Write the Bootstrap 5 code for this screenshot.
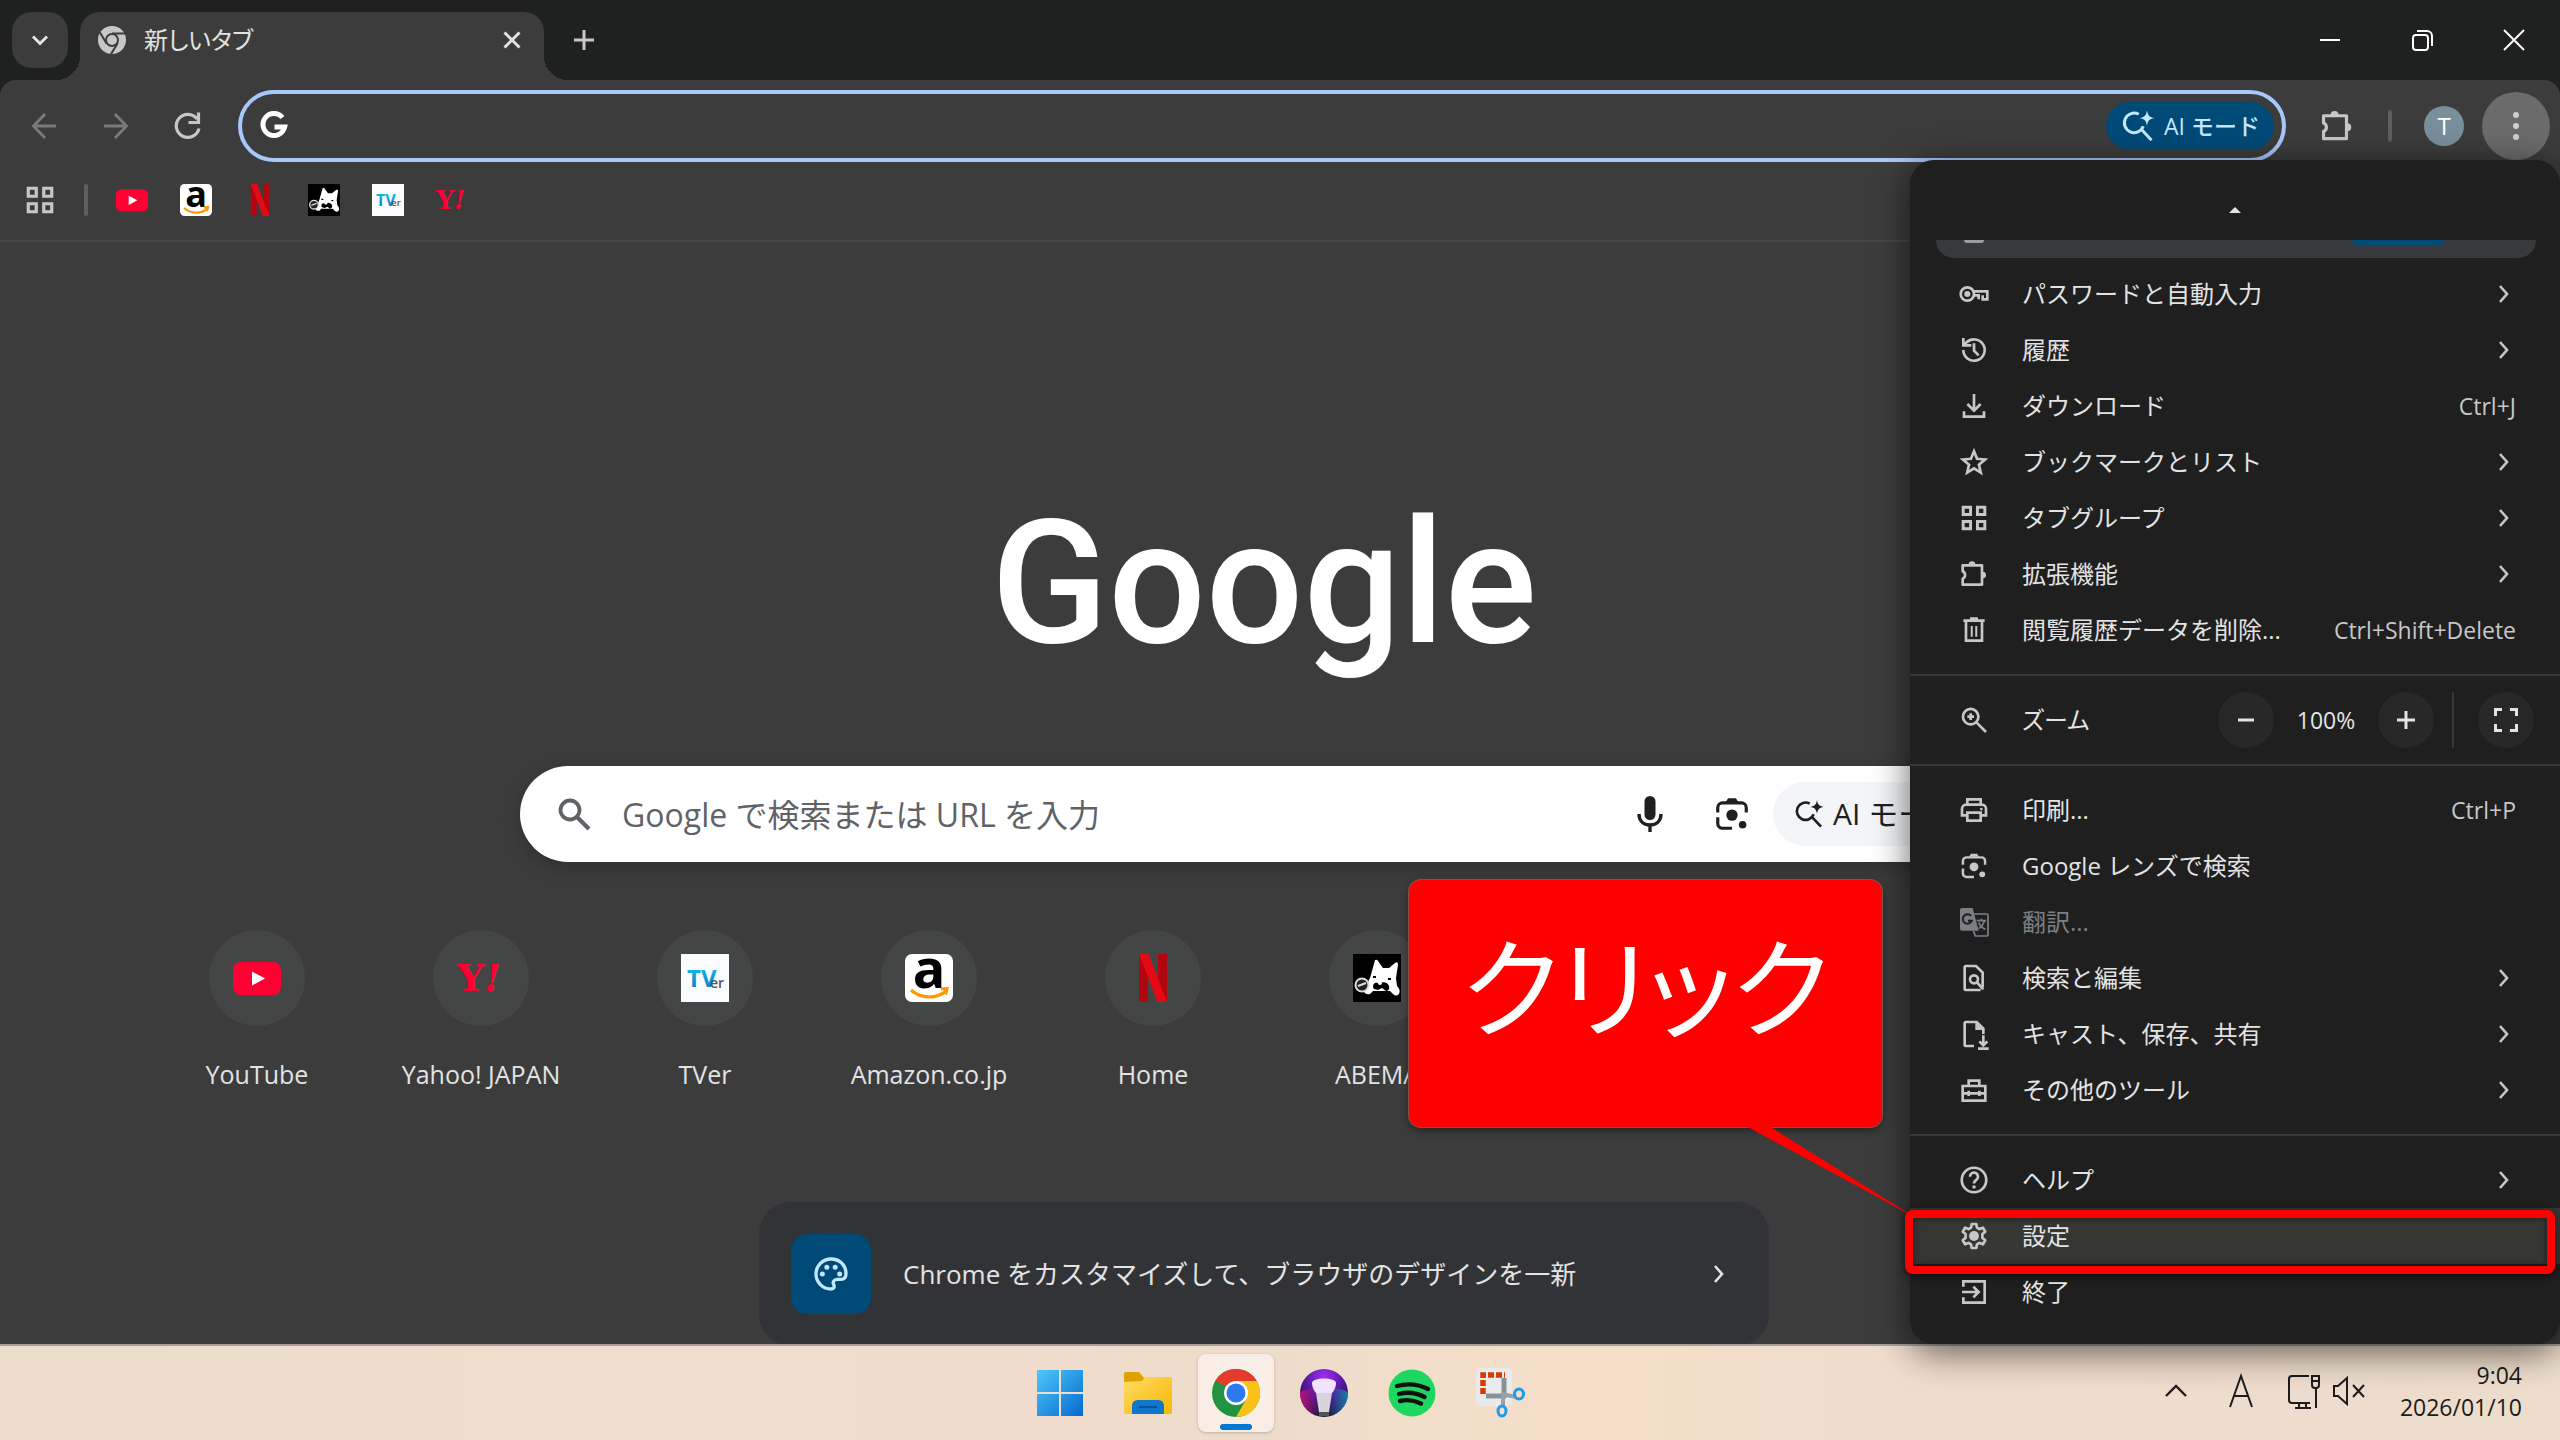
<!DOCTYPE html>
<html lang="ja" data-bs-theme="dark">
<head>
<meta charset="utf-8">
<meta name="viewport" content="width=device-width, initial-scale=1">
<title>新しいタブ</title>
<link href="https://cdn.jsdelivr.net/npm/bootstrap@5.3.0/dist/css/bootstrap.min.css" rel="stylesheet">
<style>
  body { font-family: "Open Sans", "Noto Sans CJK JP", sans-serif; font-feature-settings: "palt"; font-size: 24px; line-height: 32px; color: #e3e3e3; background: #3c3c3c; }
  svg { display: block; flex: none; stroke-width: 2; }
  a { color: inherit; text-decoration: none; }
  .btn { --bs-btn-padding-x: 0; --bs-btn-padding-y: 0; --bs-btn-border-width: 0; --bs-btn-color: inherit; --bs-btn-font-size: 24px; --bs-btn-line-height: 32px; display: flex; align-items: center; justify-content: center; flex: none; }
  .ln { fill: none; stroke: currentColor; }
  .i24 { width: 24px; height: 24px; } .i32 { width: 32px; height: 32px; } .i36 { width: 36px; height: 36px; } .i48 { width: 48px; height: 48px; }

  .shell { min-height: 100vh; background: #1f2121; }
  .tabstrip { height: 80px; padding-left: 12px; }
  .tab-area { padding-top: 12px; }
  .tab-search { width: 56px; height: 56px; border-radius: 20px; background: #3c3c3c; margin-right: 12px; }
  .active-tab { position: relative; width: 464px; height: 68px; border-radius: 20px 20px 0 0; background: #3c3c3c; padding: 0 20px 12px 18px; gap: 18px; }
  .active-tab::before, .active-tab::after { content: ""; position: absolute; bottom: 0; width: 24px; height: 24px; }
  .active-tab::before { right: 100%; background: radial-gradient(circle at 0 0, transparent 24px, #3c3c3c 24px); }
  .active-tab::after { left: 100%; background: radial-gradient(circle at 100% 0, transparent 24px, #3c3c3c 24px); }
  .win-btn { width: 92px; height: 80px; color: #fff; }

  .chrome-bars { background: #3c3c3c; border-radius: 16px 16px 0 0; border-bottom: 2px solid #484848; }
  .toolbar { height: 92px; padding: 0 10px 0 8px; position: relative; }
  .nav-btn { width: 72px; height: 56px; color: #c7c7c7; }
  .nav-btn.off { color: #7b7b7b; }
  .omnibox { height: 72px; border: 4px solid #a8c7fa; border-radius: 36px; padding: 0 8px 0 16px; margin-left: 14px; gap: 12px; }
  .omnibox input, .searchbox input { background: none; border: 0; outline: 0; box-shadow: none; min-width: 0; color: inherit; }
  .ai-chip { height: 48px; width: 168px; border-radius: 24px; gap: 8px; background: #004a77 !important; color: #c2e7ff !important; font-weight: 500; font-size: 23px; }
  .ext-btn { width: 102px; color: #c7c7c7 !important; }
  .vbar { width: 4px; height: 32px; border-radius: 2px; background: #5e5e5e; }
  .avatar { width: 40px; height: 40px; border-radius: 50%; margin: 0 18px 0 32px; background: #78909c !important; color: #fff !important; }
  .kebab { width: 68px; height: 68px; border-radius: 50%; background: #6b6b6b !important; color: #d0d0d0 !important; }
  .bookmarks { height: 68px; padding: 0 0 12px 24px; gap: 32px; }
  .bookmarks .vbar { margin: 0 -4px; }
  .bookmarks .btn { color: #c7c7c7; }

  .ntp { background: #3c3c3c; padding-right: 32px; height: 1102px; overflow: hidden; }
  .wordmark { font-family: Roboto, sans-serif; font-weight: 500; font-size: 172px; line-height: 240px; color: #fff; margin: 221px 0 63px; }
  .searchbox { width: 1488px; height: 96px; border-radius: 48px; background: #fff; color: #1f1f1f; padding: 0 24px 0 36px; box-shadow: 0 6px 20px #0003; font-size: 32px; }
  .searchbox input { margin-left: 28px; color: #5f6368; font-size: 32px; }
  .searchbox input::placeholder { color: #5f6368; opacity: 1; }
  .tool-btn { width: 82px; }
  .ai-pill { width: 211px; height: 64px; border-radius: 32px; background: #f3f5f8 !important; color: #1f1f1f !important; font-size: 30px; gap: 8px; justify-content: flex-start; padding-left: 20px; }
  .shortcuts { margin-top: 68px; padding-left: 145px; }
  .site { width: 224px; font-size: 25px; color: #e3e3e3; }
  .disc { width: 96px; height: 96px; border-radius: 50%; background: #444645; margin-bottom: 32px; }
  .promo { width: 1010px; height: 144px; border-radius: 32px; background: #323336; margin-top: 112px; padding: 0 38px 0 32px; gap: 32px; font-size: 26px; font-feature-settings: normal; }
  .promo-icon { width: 80px; height: 80px; border-radius: 16px; background: #004a77; color: #c2e7ff; }

  .taskbar { height: 96px; border-top: 2px solid #a99f98; background: linear-gradient(90deg, #ecdecb, #f1ddce 30%, #eedccb 50%, #f5dfc9 62%, #efdccd 75%, #edddcb); color: #1c1c1c; }
  .tray { color: #1c1c1c; right: 38px; top: 0; bottom: 4px; }
  .clock { font-size: 23px; width: 152px; }
  .apps { gap: 12px; }
  .app { width: 76px; height: 78px; border-radius: 8px; }
  .app.on { background: #f9eee5; box-shadow: 0 1px 3px #0003; position: relative; }
  .app.on::after { content: ""; position: absolute; bottom: 2px; width: 32px; height: 6px; border-radius: 3px; background: #0078d4; }

  .appmenu { position: absolute; top: 160px; right: 0; width: 650px; background: #1f1f1f; border-radius: 24px; box-shadow: 0 8px 36px #0009; padding-bottom: 24px; z-index: 5; }
  .scroll-up { height: 80px; padding-top: 20px; }
  .peek { height: 18px; margin: 0 24px 8px 26px; border-radius: 0 0 24px 24px; background: #37393d; overflow: hidden; }
  .peek::before { content: ""; display: block; float: left; width: 20px; height: 3px; margin-left: 28px; border-radius: 0 0 12px 12px; background: #9a9c9f; }
  .peek span { display: block; width: 92px; height: 6px; margin-left: 416px; border-radius: 0 0 48px 48px; background: #004a77; }
  .mrow { width: 100%; height: 56px; padding: 0 44px 0 48px; gap: 32px; color: #e3e3e3 !important; justify-content: flex-start; text-align: left; border-radius: 0; position: relative; }
  .mrow svg { color: #c7c7c7; }
  .mrow kbd { margin-left: auto; padding: 0; background: none; color: #c7c7c7; font: inherit; font-size: 23px; }
  .mrow .arrow { margin-left: auto; }
  .mrow.off, .mrow.off svg { color: #7b7f84 !important; }
  .mrow.current { background: #363735; }
  .mrow.current::after { content: ""; position: absolute; inset: 2px 5px -10px -5px; border: 8px solid #f00; border-radius: 8px; box-shadow: 0 2px 8px #000a, inset 0 0 6px #0008; }
  .appmenu hr { margin: 16px 0; border-top: 2px solid #383838; opacity: 1; }
  .zrow { padding-right: 26px; gap: 0; }
  .zname { padding-left: 32px; }
  .zbtn { width: 56px; height: 56px; border-radius: 50%; background: #282828 !important; }
  .zbtn svg { color: #e3e3e3; }
  .zval { width: 104px; font-size: 23px; }
  .zbar { width: 2px; height: 56px; background: #383838; margin: 0 24px 0 18px; }

  .callout { position: absolute; top: 720px; left: -501px; width: 473px; height: 247px; background: #f00; color: #fff; border-radius: 12px; box-shadow: 0 0 0 1px #8a5050, 0 3px 8px #0007; font-size: 108px; line-height: 216px; font-weight: 400; z-index: 6; }
  .callout svg { position: absolute; top: 246px; left: 337px; }
</style>
<script src="https://cdn.jsdelivr.net/npm/bootstrap@5.3.0/dist/js/bootstrap.bundle.min.js"></script>
</head>
<body>
<svg width="0" height="0" class="position-absolute" aria-hidden="true">
  <defs>
    <linearGradient id="tv" x1="0" x2="0" y1="0" y2="1"><stop offset="0" stop-color="#12d0ee"/><stop offset="1" stop-color="#0a6cc0"/></linearGradient>
    <symbol id="right" viewBox="0 0 24 24"><path class="ln" stroke-width="2.6" d="M8 4l7 8-7 8"/></symbol>
    <symbol id="puzzle" viewBox="0 0 24 24"><path class="ln" stroke-linejoin="round" d="M3.500 5.500h14.500v14.500h-14.500v-4.500a3 3 0 0 0 0-5.500z"/><path fill="currentColor" d="M8 5a2.500 2.500 0 0 1 5 0zM18.500 10.300a2.500 2.500 0 0 1 0 5z"/></symbol>
    <symbol id="grid" viewBox="0 0 24 24"><path class="ln" stroke-width="2.400" d="M3.200 3.200h6v6h-6zM14.800 3.200h6v6h-6zM3.200 14.800h6v6h-6zM14.800 14.800h6v6h-6z"/></symbol>
    <symbol id="lens" viewBox="0 0 24 24"><path class="ln" d="M3 11V8a3 3 0 0 1 3-3h12a3 3 0 0 1 3 3v3M3 14v4a3 3 0 0 0 3 3h6"/><path fill="currentColor" d="M8 4.500L9.500 2h5L16 4.500z"/><circle cx="12" cy="12.700" r="3.600" fill="currentColor"/><circle cx="18.700" cy="18.800" r="2.400" fill="currentColor"/></symbol>
    <symbol id="aisearch" viewBox="0 0 24 24"><path class="ln" d="M12.500 4.200A6.500 6.500 0 1 0 15.500 12.200M14.500 14.500l6.500 7"/><path fill="currentColor" d="M18 1.500c.6 3.500 1.500 4.500 5 5.200-3.500.7-4.400 1.700-5 5.200-.6-3.500-1.500-4.500-5-5.200 3.500-.7 4.400-1.700 5-5.200z"/></symbol>
    <symbol id="yt" viewBox="0 0 48 48"><rect y="8" width="48" height="33" rx="8" fill="#ff0033"/><path d="M19 17.500l13 7-13 7z" fill="#fff"/></symbol>
    <symbol id="amz" viewBox="0 0 48 48"><rect width="48" height="48" rx="7" fill="#fff"/><text x="24" y="34" text-anchor="middle" font-family="Open Sans" font-weight="700" font-size="54" fill="#000">a</text><path d="M6 36c10 9 26 9 35 1M36 35l6-.500-1.500 6" fill="none" stroke="#f90" stroke-width="3.200"/></symbol>
    <symbol id="nfx" viewBox="0 0 48 48"><path d="M10 0h9v48h-9zM29 0h9v48h-9z" fill="#b1060f"/><path d="M10 0h9.500L38 48h-9.500z" fill="#e50914"/></symbol>
    <symbol id="dog" viewBox="0 0 48 48"><path d="M0 0h48v48H0z"/><path d="M17 24L19 17 22 6q2-1 3 1l5 7h6l6-5q3-2 3 2l-2 13 1 8q4 4 2 8-3 3-6 0l-3-3H20l-3 3q-4 1-6-2l5-6q-2-4 1-8z" fill="#fff"/><circle cx="9" cy="31" r="6.500" fill="#222" stroke="#ddd" stroke-width="2"/><path d="M5 32l8-3" stroke="#ddd" stroke-width="2"/><path d="M20 33c0-5 4-5 6-3 3-3 9-2 10 2 1 3-1 5-3 5l-4-3-4 2-4-1zM20 22h3v2h-3zM35 24h3v2h-3z"/><circle cx="27" cy="29" r="2" fill="#fff"/></symbol>
    <symbol id="tver" viewBox="0 0 48 48"><path d="M0 0h48v48H0z" fill="#fbfcff"/><text x="6" y="33" font-family="Open Sans" font-weight="700" font-size="24" fill="url(#tv)">TV</text><text x="29" y="33.500" font-family="Open Sans" font-weight="600" font-size="14" fill="#555">er</text></symbol>
    <symbol id="yah" viewBox="0 0 48 48"><text x="0" y="37" font-family="DejaVu Serif" font-weight="700" font-size="38" fill="#ff0033">Y<tspan font-style="italic">!</tspan></text></symbol>
  </defs>
</svg>

<div class="shell d-flex flex-column position-relative">
  <header class="tabstrip d-flex align-items-end">
    <div class="tab-area d-flex align-items-start h-100 flex-grow-1">
      <button class="btn tab-search" aria-label="タブを検索"><svg class="i24" viewBox="0 0 24 24"><path class="ln" stroke-width="3" d="M5 8.500l7 7 7-7"/></svg></button>
      <div class="active-tab d-flex align-items-center">
        <svg width="28" height="28" viewBox="0 0 28 28"><circle cx="14" cy="14" r="14" fill="#c7c7c7"/><circle cx="14" cy="14" r="6" fill="#c7c7c7" stroke="#3c3c3c" stroke-width="2"/><path d="M14 7.500h13M8.500 17.500L2 6.500M19.500 17.500L13 28" stroke="#3c3c3c" stroke-width="2"/></svg>
        <span class="flex-grow-1">新しいタブ</span>
        <button class="btn" aria-label="タブを閉じる"><svg class="i24" viewBox="0 0 24 24"><path class="ln" stroke-width="3" d="M4.500 4.500l15 15M19.500 4.500l-15 15"/></svg></button>
      </div>
      <button class="btn nav-btn ms-1" aria-label="新しいタブを開く"><svg class="i24" viewBox="0 0 24 24"><path class="ln" stroke-width="3" d="M12 2v20M2 12h20"/></svg></button>
    </div>
    <button class="btn win-btn" aria-label="最小化"><svg class="i24" viewBox="0 0 24 24"><path class="ln" d="M2 12h20"/></svg></button>
    <button class="btn win-btn" aria-label="元に戻す"><svg class="i24" viewBox="0 0 24 24"><rect class="ln" x="3" y="7" width="15" height="15" rx="3"/><path class="ln" d="M7 3h10a5 5 0 0 1 5 5v10"/></svg></button>
    <button class="btn win-btn" aria-label="閉じる"><svg class="i24" viewBox="0 0 24 24"><path class="ln" d="M2 2l20 20M22 2L2 22"/></svg></button>
  </header>

  <div class="chrome-bars">
    <nav class="toolbar d-flex align-items-center">
      <button class="btn nav-btn off" aria-label="戻る"><svg class="i32" viewBox="0 0 32 32"><path class="ln" stroke-width="2.800" d="M28 16H6M17 4L5.500 16 17 28"/></svg></button>
      <button class="btn nav-btn off" aria-label="進む"><svg class="i32" viewBox="0 0 32 32"><path class="ln" stroke-width="2.800" d="M4 16h22M15 4l11.500 12L15 28"/></svg></button>
      <button class="btn nav-btn" aria-label="再読み込み"><svg class="i32" viewBox="0 0 32 32"><path class="ln" stroke-width="3.200" d="M27 18.500A11.500 11.500 0 1 1 25 9M26.500 2.500v10h-10"/></svg></button>
      <div class="omnibox d-flex align-items-center flex-grow-1">
        <svg width="32" height="32" viewBox="0 0 32 32"><path d="M24.500 7.500A11 11 0 1 0 26.700 17H16.500" fill="none" stroke="#fff" stroke-width="5"/></svg>
        <input class="flex-grow-1" type="text" aria-label="アドレスと検索バー">
        <button class="btn ai-chip"><svg class="i36" viewBox="0 0 24 24"><use href="#aisearch"/></svg>AI モード</button>
      </div>
      <button class="btn ext-btn" aria-label="拡張機能"><svg width="38" height="38"><use href="#puzzle"/></svg></button>
      <span class="vbar"></span>
      <button class="btn avatar" aria-label="プロフィール">T</button>
      <button class="btn kebab" aria-label="メニュー"><svg width="32" height="32" viewBox="0 0 32 32" fill="currentColor"><circle cx="16" cy="5" r="3"/><circle cx="16" cy="16" r="3"/><circle cx="16" cy="27" r="3"/></svg></button>
    </nav>
    <nav class="bookmarks d-flex align-items-center">
      <button class="btn" aria-label="タブグループ"><svg class="i32"><use href="#grid"/></svg></button>
      <span class="vbar"></span>
      <a href="#yt" aria-label="YouTube"><svg class="i32"><use href="#yt"/></svg></a>
      <a href="#amz" aria-label="Amazon"><svg class="i32"><use href="#amz"/></svg></a>
      <a href="#nfx" aria-label="Netflix"><svg class="i32"><use href="#nfx"/></svg></a>
      <a href="#dog" aria-label="ABEMA"><svg class="i32"><use href="#dog"/></svg></a>
      <a href="#tver" aria-label="TVer"><svg class="i32"><use href="#tver"/></svg></a>
      <a href="#yah" aria-label="Yahoo! JAPAN"><svg class="i32"><use href="#yah"/></svg></a>
    </nav>
  </div>

  <main class="ntp d-flex flex-column align-items-center">
    <h1 class="wordmark">Google</h1>
    <form class="searchbox d-flex align-items-center flex-shrink-0">
      <svg width="36" height="36" viewBox="0 0 36 36" color="#5f6368"><circle class="ln" stroke-width="3.800" cx="14" cy="14" r="9.500"/><path class="ln" stroke-width="4.200" d="M20.500 20.500L33 33"/></svg>
      <input class="flex-grow-1" type="search" placeholder="Google で検索または URL を入力" aria-label="検索">
      <button type="button" class="btn tool-btn" aria-label="音声検索"><svg width="36" height="40" viewBox="0 0 36 40"><rect x="12.500" y="2" width="11" height="24" rx="5.500" fill="currentColor"/><path class="ln" stroke-width="3.400" d="M7 20c0 7 4.500 11 11 11s11-4 11-11M18 31v7"/></svg></button>
      <button type="button" class="btn tool-btn" aria-label="画像で検索"><svg width="38" height="38"><use href="#lens"/></svg></button>
      <button type="button" class="btn ai-pill"><svg width="32" height="32"><use href="#aisearch"/></svg>AI モード</button>
    </form>
    <nav class="shortcuts d-flex align-self-start">
      <a class="site d-flex flex-column align-items-center" href="#yt"><span class="disc d-flex align-items-center justify-content-center"><svg class="i48"><use href="#yt"/></svg></span>YouTube</a>
      <a class="site d-flex flex-column align-items-center" href="#yah"><span class="disc d-flex align-items-center justify-content-center"><svg class="i48"><use href="#yah"/></svg></span>Yahoo! JAPAN</a>
      <a class="site d-flex flex-column align-items-center" href="#tver"><span class="disc d-flex align-items-center justify-content-center"><svg class="i48"><use href="#tver"/></svg></span>TVer</a>
      <a class="site d-flex flex-column align-items-center" href="#amz"><span class="disc d-flex align-items-center justify-content-center"><svg class="i48"><use href="#amz"/></svg></span>Amazon.co.jp</a>
      <a class="site d-flex flex-column align-items-center" href="#nfx"><span class="disc d-flex align-items-center justify-content-center"><svg class="i48"><use href="#nfx"/></svg></span>Home</a>
      <a class="site d-flex flex-column align-items-center" href="#dog"><span class="disc d-flex align-items-center justify-content-center"><svg class="i48"><use href="#dog"/></svg></span>ABEMA</a>
    </nav>
    <a class="promo d-flex align-items-center flex-shrink-0" href="#customize">
      <span class="promo-icon d-flex align-items-center justify-content-center"><svg width="40" height="40" viewBox="0 0 24 24"><path class="ln" d="M12 3a9 9 0 1 0 0 18c2 0 2.200-1.500 1.600-2.600-.8-1.500.2-3.200 2-3.200H18c2 0 3-1.500 3-3.500C21 6.500 17 3 12 3z"/><g fill="currentColor"><circle cx="6.800" cy="12" r="1.500"/><circle cx="9.500" cy="8" r="1.500"/><circle cx="14.500" cy="8" r="1.500"/><circle cx="17.200" cy="12" r="1.500"/></g></svg></span>
      <span class="flex-grow-1">Chrome をカスタマイズして、ブラウザのデザインを一新</span>
      <svg class="i24"><use href="#right"/></svg>
    </a>
  </main>

  <footer class="taskbar d-flex align-items-center justify-content-center position-relative">
    <div class="apps d-flex align-items-center">
      <button class="btn app" aria-label="スタート"><svg width="46" height="46"><defs><linearGradient id="w" x1="0" y1="0" x2="1" y2="1"><stop stop-color="#4cc8fa"/><stop offset="1" stop-color="#0669cf"/></linearGradient></defs><path fill="url(#w)" d="M0 0h22v22H0zM24 0h22v22H24zM0 24h22v22H0zM24 24h22v22H24z"/></svg></button>
      <button class="btn app" aria-label="エクスプローラー"><svg width="48" height="46"><defs><linearGradient id="f" x1="0" y1="0" x2="1" y2="1"><stop stop-color="#ffdb68"/><stop offset="1" stop-color="#f9b700"/></linearGradient></defs><path d="M0 4q0-2 2-2h13l5 6v4H0z" fill="#dfa000"/><path d="M0 12l18-1 3-4h25q2 0 2 2v33q0 2-2 2H2q-2 0-2-2z" fill="url(#f)"/><path d="M8 44V36q0-6 6-6h20q6 0 6 6v8z" fill="#0f76cb"/><path d="M15 37h18" stroke="#07539b" stroke-width="2"/></svg></button>
      <button class="btn app on" aria-label="Chrome"><svg width="48" height="48" viewBox="0 0 48 48"><circle cx="24" cy="24" r="24" fill="#229342"/><path d="M24 24L3.200 12A24 24 0 0 1 44.800 12z" fill="#e33b2e"/><path d="M24 12h20.800A24 24 0 0 1 24 48l10.400-18z" fill="#fbc116"/><path d="M3.200 12l10.500 18L24 24z" fill="#229342"/><path d="M3.200 12h20.800v12z" fill="#e33b2e"/><path d="M3.200 12L13.700 30 20 20z" fill="#229342"/><circle cx="24" cy="24" r="12" fill="#fff"/><circle cx="24" cy="24" r="9.500" fill="#2f79f0"/></svg></button>
      <button class="btn app" aria-label="ライト"><svg width="48" height="48"><defs><radialGradient id="b" cx=".5" cy=".15" r=".95"><stop stop-color="#9b30f0"/><stop offset=".5" stop-color="#4a1590"/><stop offset="1" stop-color="#12182c"/></radialGradient><linearGradient id="b2"><stop stop-color="#d8157c"/><stop offset=".4" stop-color="#d8157c" stop-opacity="0"/><stop offset=".6" stop-color="#139ab6" stop-opacity="0"/><stop offset="1" stop-color="#139ab6"/></linearGradient></defs><circle cx="24" cy="24" r="24" fill="url(#b)"/><path d="M0 24a24 24 0 0 0 48 0q-4-5-24-5T0 24z" fill="url(#b2)" opacity=".8"/><path d="M12 14c0-6 24-6 24 0 0 5-3 9-4 10H16c-1-1-4-5-4-10z" fill="#f3e2ff"/><path d="M16 24h16l-3 19H19z" fill="#d9d3dc"/><path d="M19 43h10v4H19z" fill="#555"/></svg></button>
      <button class="btn app" aria-label="Spotify"><svg width="48" height="48"><circle cx="24" cy="24" r="23.500" fill="#1ed760"/><path d="M9 17c11-3 21-2 31 3M11 25c9-2.500 17-1.500 25.500 3M12 32c8-2 14-1 21 2.500" fill="none" stroke="#111" stroke-width="4.400" stroke-linecap="round"/></svg></button>
      <button class="btn app" aria-label="切り取り"><svg width="52" height="50"><rect x="2" y="0" width="36" height="38" rx="5" fill="#e9eaec"/><path d="M9 26V7h22" fill="none" stroke="#d83b01" stroke-width="5.500" stroke-dasharray="6 2"/><path d="M30 10v20M12 28h20" stroke="#8a9299" stroke-width="5"/><path d="M28 26l14 3M29 27v12" stroke="#9aa2a8" stroke-width="4"/><ellipse cx="45" cy="26" rx="4.500" ry="5" fill="none" stroke="#1e9be8" stroke-width="3"/><ellipse cx="28" cy="43" rx="4" ry="5" fill="none" stroke="#1e9be8" stroke-width="3"/></svg></button>
    </div>
    <div class="tray position-absolute d-flex align-items-center">
      <svg class="i24 me-4" viewBox="0 0 24 24"><path class="ln" stroke-width="2.400" d="M2 17L12 7l10 10"/></svg>
      <svg class="ms-3 me-4" width="26" height="36" viewBox="0 0 26 36"><path class="ln" d="M2 34L13 3l11 31M6 23h14"/></svg>
      <svg class="ms-2" width="36" height="36" viewBox="0 0 36 36"><path class="ln" d="M23 3H6a3 3 0 0 0-3 3v21a3 3 0 0 0 3 3h18M13 30v5M20 30v5M9 35h16M26 3h7v9a3 3 0 0 1-3 3h-1a3 3 0 0 1-3-3zM26 8h7M30 15v20"/></svg>
      <svg class="ms-2 me-1" width="36" height="32" viewBox="0 0 36 32"><path class="ln" d="M4 11h4l9-8v26l-9-8H4zM23 10l11 12M34 10L23 22"/></svg>
      <div class="clock text-end">9:04<br>2026/01/10</div>
    </div>
  </footer>

  <div class="appmenu">
    <div class="scroll-up d-flex align-items-center justify-content-center"><svg width="12" height="6"><path d="M0 6l6-6 6 6z" fill="#e3e3e3"/></svg></div>
    <div class="peek"><span></span></div>
    <button class="btn mrow"><svg class="i32" viewBox="0 0 24 24"><circle class="ln" cx="7" cy="12" r="5"/><circle cx="7" cy="12" r="2.300" fill="currentColor"/><path class="ln" d="M11.500 10H22v6h-3.500v-3M15.500 16v-3h-4"/></svg>パスワードと自動入力<svg class="i24 arrow"><use href="#right"/></svg></button>
    <button class="btn mrow"><svg class="i32" viewBox="0 0 24 24"><path class="ln" d="M4 12a8 8 0 1 0 2.500-5.800L4 8.500M4 3v5.500h6M12 7v5.500l3.500 3.500"/></svg>履歴<svg class="i24 arrow"><use href="#right"/></svg></button>
    <button class="btn mrow"><svg class="i32" viewBox="0 0 24 24"><path class="ln" d="M12 3v12M7 10.500l5 5 5-5M4.500 16v4h15v-4"/></svg>ダウンロード<kbd>Ctrl+J</kbd></button>
    <button class="btn mrow"><svg class="i32" viewBox="0 0 24 24"><path class="ln" d="M12 4l2.300 5.600 6 .500-4.600 3.900 1.400 5.900-5.100-3.200-5.100 3.200 1.400-5.900-4.600-3.900 6-.500z"/></svg>ブックマークとリスト<svg class="i24 arrow"><use href="#right"/></svg></button>
    <button class="btn mrow"><svg class="i32" viewBox="-1 -1 26 26"><use href="#grid" width="24" height="24"/></svg>タブグループ<svg class="i24 arrow"><use href="#right"/></svg></button>
    <button class="btn mrow"><svg class="i32"><use href="#puzzle"/></svg>拡張機能<svg class="i24 arrow"><use href="#right"/></svg></button>
    <button class="btn mrow"><svg class="i32" viewBox="0 0 24 24"><path class="ln" d="M6 6v14h12V6M4 5h16M9 3.500h6"/><path class="ln" stroke-width="1.500" d="M10.300 9v8M13.700 9v8"/></svg>閲覧履歴データを削除...<kbd>Ctrl+Shift+Delete</kbd></button>
    <hr>
    <div class="mrow zrow d-flex align-items-center">
      <svg class="i32" viewBox="0 0 24 24"><circle class="ln" cx="9.500" cy="9.500" r="5.800"/><path class="ln" d="M14 14l7 7M9.500 7v5M7 9.500h5"/></svg><span class="zname flex-grow-1">ズーム</span>
      <button class="btn zbtn" aria-label="縮小"><svg class="i24" viewBox="0 0 24 24"><path class="ln" stroke-width="3" d="M4 12h16"/></svg></button>
      <span class="zval text-center">100%</span>
      <button class="btn zbtn" aria-label="拡大"><svg class="i24" viewBox="0 0 24 24"><path class="ln" stroke-width="3" d="M3 12h18M12 3v18"/></svg></button>
      <span class="zbar"></span>
      <button class="btn zbtn" aria-label="全画面表示"><svg class="i24" viewBox="0 0 24 24"><path class="ln" stroke-width="3" d="M1.500 8V1.500H8M16 1.500h6.500V8M22.500 16v6.500H16M8 22.500H1.500V16"/></svg></button>
    </div>
    <hr>
    <button class="btn mrow"><svg class="i32" viewBox="0 0 24 24"><path class="ln" d="M7 8V4h10v4M7 16H3v-5a3 3 0 0 1 3-3h12a3 3 0 0 1 3 3v5h-4M7 14h10v6H7z"/><circle cx="17.500" cy="11.300" r="1" fill="currentColor"/></svg>印刷...<kbd>Ctrl+P</kbd></button>
    <button class="btn mrow"><svg class="i32" viewBox="-1 -1 26 26"><use href="#lens" width="24" height="24"/></svg>Google レンズで検索</button>
    <button class="btn mrow off" aria-disabled="true"><svg class="i32" viewBox="0 0 24 24"><path fill="currentColor" d="M3 1.500h8l4.500 17H3a1.500 1.500 0 0 1-1.500-1.500V3A1.500 1.500 0 0 1 3 1.500z"/><path class="ln" stroke-width="1.300" d="M12 6h9.500a1 1 0 0 1 1 1v14.500a1 1 0 0 1-1 1H13l-1.500-4"/><path d="M9.800 7.500A3.500 3.500 0 1 0 10.400 11H7.500" fill="none" stroke="#1f1f1f" stroke-width="1.500"/><path class="ln" stroke-width="1.300" d="M14 11h7M17.500 9.500V11M20 11c-1 3-2.500 4.500-4.500 6M15.500 12.500c1 2 2.500 4 5 5"/></svg>翻訳...</button>
    <button class="btn mrow"><svg class="i32" viewBox="0 0 24 24"><path class="ln" d="M18.500 19V8l-5-5H6a1 1 0 0 0-1 1v16a1 1 0 0 0 1 1h11"/><circle class="ln" cx="12" cy="13" r="3"/><path class="ln" d="M14 15l5 5.500"/></svg>検索と編集<svg class="i24 arrow"><use href="#right"/></svg></button>
    <button class="btn mrow"><svg class="i32" viewBox="0 0 24 24"><path class="ln" d="M19 12V8l-5-5H6a1 1 0 0 0-1 1v16a1 1 0 0 0 1 1h6M19 13v7M16 17.500l3 3 3-3M15 23h8"/><path d="M13 2l7 7h-7z" fill="currentColor"/></svg>キャスト、保存、共有<svg class="i24 arrow"><use href="#right"/></svg></button>
    <button class="btn mrow"><svg class="i32" viewBox="0 0 24 24"><path class="ln" d="M8 8V5h8v3M3.500 9h17v11h-17zM3.500 14.500h17M8 12.500v4M16 12.500v4"/></svg>その他のツール<svg class="i24 arrow"><use href="#right"/></svg></button>
    <hr>
    <button class="btn mrow"><svg class="i32" viewBox="0 0 24 24"><circle class="ln" cx="12" cy="12" r="9.200"/><path class="ln" d="M9 9.500a3 3 0 1 1 4.700 2.400C12.500 12.700 12 13.200 12 14.700"/><circle cx="12" cy="17.300" r="1.300" fill="currentColor"/></svg>ヘルプ<svg class="i24 arrow"><use href="#right"/></svg></button>
    <button class="btn mrow current"><svg class="i32" viewBox="0 0 24 24"><path class="ln" stroke-linejoin="round" d="M10.300 3h3.400l.5 2.700 1.900 1.100 2.600-1 1.700 3-2.100 1.700v2.900l2.100 1.800-1.700 3-2.600-1-1.900 1.100-.5 2.700h-3.400l-.5-2.700-1.900-1.100-2.600 1-1.700-3 2.100-1.800v-2.900l-2.100-1.700 1.700-3 2.600 1 1.900-1.100z"/><circle cx="12" cy="12" r="3.700" fill="currentColor"/></svg>設定</button>
    <button class="btn mrow"><svg class="i32" viewBox="0 0 24 24"><path class="ln" d="M4 8V4h16v16H4v-4M3 12h12M11.500 8l4 4-4 4"/></svg>終了</button>
    <div class="callout text-center">クリック<svg width="174" height="96"><path d="M0 0h23l147 92z" fill="#f00"/></svg></div>
  </div>
</div>
</body>
</html>
